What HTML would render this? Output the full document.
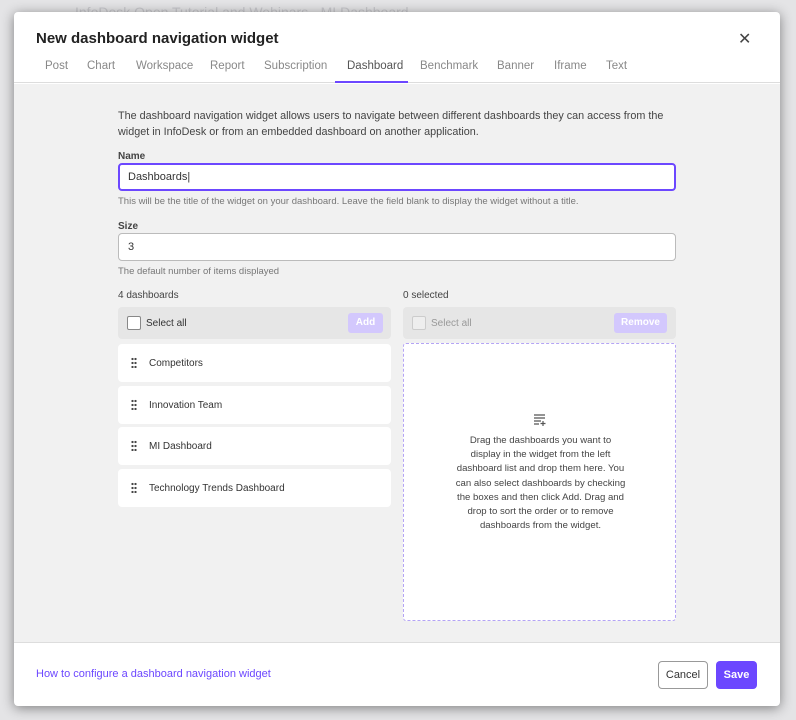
<!DOCTYPE html>
<html><head><style>
*{box-sizing:border-box;margin:0;padding:0}
body{width:796px;height:720px;background:#e4e4e6;font-family:"Liberation Sans",sans-serif;position:relative;overflow:hidden;color:#333}
.bgtxt{position:absolute;top:4px;left:75px;color:#c8c8cc;font-size:14px}
.modal{position:absolute;left:14px;top:12px;width:766px;height:694px;background:#fff;border-radius:4px;box-shadow:0 2px 12px rgba(0,0,0,.45);overflow:hidden}
.title{position:absolute;left:22px;top:18px;font-size:15px;font-weight:bold;color:#222}
.close{position:absolute;left:724px;top:17px;font-size:16px;color:#444;font-weight:300}
.tabs{position:absolute;left:0;top:0;width:100%;height:71px;border-bottom:1px solid #ddd}
.tab{position:absolute;top:48px;font-size:11.5px;color:#888}
.tab.act{color:#555}
.ul{position:absolute;left:321px;top:69px;width:73px;height:2px;background:#6c47ff}
.body{position:absolute;left:0;top:72px;width:100%;height:559px;background:#f1f1f1;border-bottom:1px solid #ddd}
.p{position:absolute;font-size:11px}
.desc{left:104px;top:24px;width:570px;line-height:16px;color:#444;font-size:10.8px}
.lbl{font-weight:bold;color:#444;font-size:10px}
.inp{position:absolute;left:104px;width:558px;height:28px;background:#fff;border:1px solid #bbb;border-radius:4px;font-size:11px;padding:7px 9px;color:#333}
.hint{color:#777;font-size:9.5px}
.hdr{position:absolute;height:32px;background:#e6e6e6;border-radius:4px}
.cb{position:absolute;left:9px;top:9px;width:14px;height:14px;border:1px solid #888;border-radius:2px;background:#fff}
.hdr span{position:absolute;left:28px;top:11px;font-size:10px;color:#333}
.btn{position:absolute;top:6px;height:20px;background:#d3c8fd;color:#fff;border-radius:3px;font-size:10px;font-weight:bold;text-align:center;line-height:20px}
.item{position:absolute;left:104px;width:273px;height:38px;background:#fff;border-radius:4px;font-size:10px;color:#333}
.item span{position:absolute;left:31px;top:14px}
.dots{position:absolute;left:13px;top:13px;width:6px;height:11px;background:radial-gradient(circle,#444 1px,transparent 1.3px) 0 0/3px 4px}
.drop{position:absolute;left:389px;top:259px;width:273px;height:278px;background:#fff;border:1px dashed #b4a4f5;border-radius:3px}
.dt{position:absolute;left:50px;top:90px;width:173px;text-align:center;font-size:9.6px;line-height:14.2px;color:#444}
.foot a{position:absolute;left:22px;top:656px;color:#6c47ff;font-size:11px;text-decoration:none}
.cancel{position:absolute;left:644px;top:649px;width:50px;height:28px;border:1px solid #999;border-radius:4px;font-size:11px;text-align:center;line-height:26px;color:#333}
.save{position:absolute;left:702px;top:649px;width:41px;height:28px;background:#6c47ff;border-radius:4px;font-size:11px;font-weight:bold;text-align:center;line-height:28px;color:#fff}
</style></head><body>
<div class="bgtxt">InfoDesk Open Tutorial and Webinars · MI Dashboard</div>
<div class="modal">
<div class="tabs">
<div class="title">New dashboard navigation widget</div>
<div class="close">✕</div>
<div class="tab" style="left:31px">Post</div>
<div class="tab" style="left:73px">Chart</div>
<div class="tab" style="left:122px">Workspace</div>
<div class="tab" style="left:196px">Report</div>
<div class="tab" style="left:250px">Subscription</div>
<div class="tab act" style="left:333px">Dashboard</div>
<div class="tab" style="left:406px">Benchmark</div>
<div class="tab" style="left:483px">Banner</div>
<div class="tab" style="left:540px">Iframe</div>
<div class="tab" style="left:592px">Text</div>
<div class="ul"></div>
</div>
<div class="body">
<div class="p desc">The dashboard navigation widget allows users to navigate between different dashboards they can access from the widget in InfoDesk or from an embedded dashboard on another application.</div>
<div class="p lbl" style="left:104px;top:67px">Name</div>
<div class="inp" style="top:79px;border:2px solid #6c47ff;padding:6px 8px">Dashboards|</div>
<div class="p hint" style="left:104px;top:112px">This will be the title of the widget on your dashboard. Leave the field blank to display the widget without a title.</div>
<div class="p lbl" style="left:104px;top:137px">Size</div>
<div class="inp" style="top:149px">3</div>
<div class="p hint" style="left:104px;top:182px">The default number of items displayed</div>
<div class="p lbl" style="left:104px;top:206px;font-weight:normal;color:#444">4 dashboards</div>
<div class="p lbl" style="left:389px;top:206px;font-weight:normal;color:#444">0 selected</div>
<div class="hdr" style="left:104px;top:223px;width:273px"><div class="cb"></div><span>Select all</span><div class="btn" style="left:230px;width:35px">Add</div></div>
<div class="hdr" style="left:389px;top:223px;width:273px"><div class="cb" style="border-color:#ccc;background:#eee"></div><span style="color:#999">Select all</span><div class="btn" style="left:211px;width:53px">Remove</div></div>
<div class="item" style="top:260px"><div class="dots"></div><span>Competitors</span></div>
<div class="item" style="top:302px"><div class="dots"></div><span>Innovation Team</span></div>
<div class="item" style="top:343px"><div class="dots"></div><span>MI Dashboard</span></div>
<div class="item" style="top:385px"><div class="dots"></div><span>Technology Trends Dashboard</span></div>
<div class="drop">
<svg style="position:absolute;left:129px;top:69px" width="14" height="14" viewBox="0 0 14 14" stroke="#555" stroke-width="1.2" fill="none"><path d="M1 2h11M1 5h11M1 8h7M1 11h5M10 8v5M7.5 10.5h5"/></svg>
<div class="dt">Drag the dashboards you want to display in the widget from the left dashboard list and drop them here. You can also select dashboards by checking the boxes and then click Add. Drag and drop to sort the order or to remove dashboards from the widget.</div>
</div>
</div>
<div class="foot"><a>How to configure a dashboard navigation widget</a></div>
<div class="cancel">Cancel</div>
<div class="save">Save</div>
</div>
</body></html>
